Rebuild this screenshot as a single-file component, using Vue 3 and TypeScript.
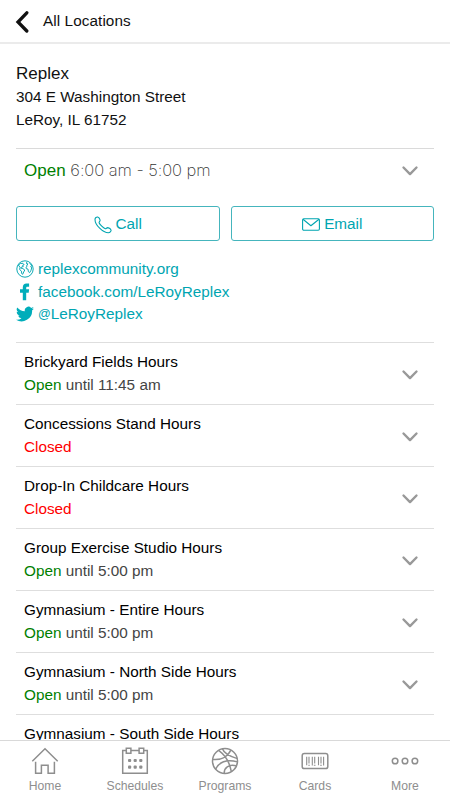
<script setup lang="ts">
interface Facility {
  name: string
  until?: string
}

const facilities: Facility[] = [
  { name: 'Brickyard Fields Hours', until: '11:45 am' },
  { name: 'Concessions Stand Hours' },
  { name: 'Drop-In Childcare Hours' },
  { name: 'Group Exercise Studio Hours', until: '5:00 pm' },
  { name: 'Gymnasium - Entire Hours', until: '5:00 pm' },
  { name: 'Gymnasium - North Side Hours', until: '5:00 pm' },
  { name: 'Gymnasium - South Side Hours', until: '5:00 pm' },
]

const tabs: string[] = ['Home', 'Schedules', 'Programs', 'Cards', 'More']
</script>

<template>
  <div class="screen">
    <header class="header">
      <svg class="back" viewBox="0 0 14 24"><path d="M11.8 2.8 3 12l8.8 9" /></svg>
      <span>All Locations</span>
    </header>

    <main class="content">
      <section class="address">
        <h1>Replex</h1>
        <p>304 E Washington Street</p>
        <p>LeRoy, IL 61752</p>
      </section>

      <section class="today">
        <div><span class="open">Open</span> <span class="time">6:00 am - 5:00 pm</span></div>
        <svg class="chevron" viewBox="0 0 18 12"><path d="m2.5 2.5 6.5 6.6 6.5-6.6" /></svg>
      </section>

      <div class="actions">
        <button>
          <svg width="18" height="18" viewBox="0 0 18 18" class="line">
            <path d="M1 3.4C1 1.9 2.6.7 3.7 1c1 .4 2.2 2.1 2.4 3.1.2 1.2-1.3 1.8-1 2.6.8 2 4.2 5.2 6.2 6 .8.3 1.4-1.2 2.5-1.1 1.1.2 3 1.6 3.3 2.5.2 1-1.3 2.6-2.7 2.7C8.9 16.8 1 9 1 3.4Z" />
          </svg>
          <span>Call</span>
        </button>
        <button>
          <svg width="18" height="13" viewBox="0 0 18 13" class="line">
            <rect x=".6" y=".8" width="16.8" height="11.4" rx="1.2" /><path d="m1 1.3 7.9 6.4L17 1.3" />
          </svg>
          <span>Email</span>
        </button>
      </div>

      <nav class="links">
        <a>
          <svg viewBox="0 0 18 18">
            <circle cx="9" cy="9" r="8.2" class="stroke" />
            <path class="stroke" d="m2.4 5 2.1-1.5 2.4-.2 1.2 1.4-1.4.5.5 1.5-1.5.2-.9 1.2 2 .5 2 1.4-1.1 2-1 2.3-1-.7-.2-2.4-1.8-1.6.3-2.2L2.4 5Zm8.3-2.9-.2 1.6 1.5.2-1.3 1.5.7.7-1.4 1.1.3 1.5 1.7.4.4 2.6 1.2 1 1.4-2.4.7-2.3-1-1.7 1.3-.6-2.6-2.6" />
          </svg>
          <span>replexcommunity.org</span>
        </a>
        <a>
          <svg viewBox="0 0 18 18"><path d="M6.8 17.3V9.7H4V6.3h2.8V4.4C6.8 1.9 8.2.6 10.4.6h2.7v3.2H11.4c-.9 0-1.2.4-1.2 1.2v1.3h2.9l-.4 3.4h-2.5v7.6Z" /></svg>
          <span>facebook.com/LeRoyReplex</span>
        </a>
        <a>
          <svg viewBox="0 0 24 24"><path d="M24 4.6a10 10 0 0 1-2.8.8 5 5 0 0 0 2.1-2.7 10 10 0 0 1-3.1 1.2 4.9 4.9 0 0 0-8.4 4.5A14 14 0 0 1 1.7 3.2a4.9 4.9 0 0 0 1.5 6.5A5 5 0 0 1 1 9.1a4.9 4.9 0 0 0 3.9 4.9 5 5 0 0 1-2.2.1 4.9 4.9 0 0 0 4.6 3.4A9.9 9.9 0 0 1 0 19.5 14 14 0 0 0 21.5 7 10 10 0 0 0 24 4.6Z" /></svg>
          <span><span class="at">@</span>LeRoyReplex</span>
        </a>
      </nav>

      <ul class="facilities">
        <li v-for="f in facilities" :key="f.name">
          <div>
            <p class="name">{{ f.name }}</p>
            <p v-if="f.until" class="until"><span class="open">Open</span> until {{ f.until }}</p>
            <p v-else class="closed">Closed</p>
          </div>
          <svg class="chevron" viewBox="0 0 18 12"><path d="m2.5 2.5 6.5 6.6 6.5-6.6" /></svg>
        </li>
      </ul>
    </main>

    <footer class="tabs">
      <div v-for="tab in tabs" :key="tab" class="tab">
        <svg viewBox="0 0 28 28">
          <g v-if="tab === 'Home'"><path d="M1.3 14.3 14 1.7l12.7 12.6M4.6 14.8v11.5h5.8v-8h6.7v8h6.3V14.8" /></g>
          <g v-else-if="tab === 'Schedules'">
            <path d="M5 3.4H1.7v22.9h24.6V3.4H23M10 3.4h8" />
            <path d="M5.3 1.3h4.6v5H5.3zM18.1 1.3h4.6v5h-4.6z" />
            <g class="dots">
              <rect v-for="n in 6" :key="n" :x="7 + ((n - 1) % 3) * 5.6" :y="n < 4 ? 11.9 : 18.5" width="3.2" height="3.2" rx="1" />
            </g>
          </g>
          <g v-else-if="tab === 'Programs'">
            <circle cx="14" cy="14" r="12.5" />
            <path d="M7.6 3.4c6.3 4.6 11 11.6 12.7 20.9M1.6 12.4c7.6.9 14.8-2.2 18.2-9.3M11.4 1.8c1.3 3.6 5.3 7 15 9.8M4.6 22.2C7.6 15.4 15.6 11.6 26.4 14.9M13.2 26.3c-.2-5.5 4.4-9.3 11.9-7.5" />
          </g>
          <g v-else-if="tab === 'Cards'">
            <rect x="1.2" y="6.6" width="25.6" height="15" rx="2.2" />
            <path class="bars" d="M5.7 9.8v8.5M8 9.8v6.7M11.3 9.8v8.7M13.7 9.8v6.7M17.5 9.8v8.5M20 9.8v6.7M22.6 9.8v8.7M7.3 18.2h1.5M12.8 18.2h1.7M19.2 18.2h1.6" />
          </g>
          <g v-else><circle cx="4.1" cy="14" r="2.8" /><circle cx="14" cy="14" r="2.8" /><circle cx="23.9" cy="14" r="2.8" /></g>
        </svg>
        <span>{{ tab }}</span>
      </div>
    </footer>
  </div>
</template>

<style>
body {
  margin: 0;
  background: #fff;
}
</style>

<style scoped>
.screen {
  display: flex;
  flex-direction: column;
  box-sizing: border-box;
  width: 450px;
  height: 800px;
  overflow: hidden;
  color: #111;
  font: 15.3px/22.5px "Liberation Sans", Arial, sans-serif;
}
.header {
  display: flex;
  align-items: center;
  flex: none;
  gap: 14px;
  box-sizing: border-box;
  height: 44px;
  padding: 1px 15px 0;
  border-bottom: 2px solid #ebebeb;
  letter-spacing: .08px;
}
.back {
  width: 14px;
  height: 24px;
}
svg {
  flex: none;
  fill: none;
}
.back path {
  stroke: #111;
  stroke-width: 3.3;
  stroke-linecap: round;
}
.content {
  flex: 1;
  min-height: 0;
  padding: 0 16px;
  overflow: hidden;
}
.address {
  padding-top: 18px;
  height: 86px;
}
h1, p {
  margin: 0;
}
h1 {
  font-size: 17px;
  line-height: 24px;
  font-weight: 400;
}
.today {
  display: flex;
  align-items: center;
  justify-content: space-between;
  box-sizing: border-box;
  height: 45px;
  padding: 0 15px 0 8px;
  border-top: 1px solid #dadada;
  font-size: 17px;
}
.open {
  color: #008000;
}
.time {
  font-family: Inter, "Liberation Sans", sans-serif;
  font-size: 16.5px;
  font-weight: 200;
  letter-spacing: -.07px;
  color: #333;
}
.chevron {
  width: 18px;
  height: 12px;
}
.chevron path {
  stroke: #999;
  stroke-width: 2.4;
  stroke-linecap: round;
  stroke-linejoin: round;
}
.actions {
  display: grid;
  grid-template-columns: 1fr 1fr;
  gap: 11px;
  padding-top: 13px;
}
button {
  display: flex;
  align-items: center;
  justify-content: center;
  gap: 4px;
  height: 35px;
  padding: 2px 0 0;
  border: 1px solid #45b5bd;
  border-radius: 3px;
  background: #fff;
  color: #00a5b1;
  font: inherit;
}
.line {
  stroke: #00a5b1;
  stroke-width: 1.1;
  stroke-linejoin: round;
}
.links {
  padding-top: 17px;
  height: 84px;
  color: #00a5b1;
}
.links a {
  display: flex;
  align-items: center;
  gap: 4px;
  height: 22.5px;
}
.links svg {
  width: 18px;
  height: 18px;
  fill: #00adba;
}
.links .stroke {
  fill: none;
  stroke: #00a5b1;
  stroke-width: .95;
}
.at {
  font-size: 12.6px;
  vertical-align: 1px;
  line-height: 1;
}
.facilities {
  margin: 0;
  padding: 0;
  list-style: none;
}
.facilities li {
  display: flex;
  align-items: center;
  justify-content: space-between;
  box-sizing: border-box;
  height: 62px;
  padding: 0 15px 0 8px;
  border-top: 1px solid #dedede;
}
.facilities .chevron {
  margin-top: 2px;
}
.name {
  color: #000;
}
.until {
  color: #444;
}
.closed {
  color: #f00;
}
.tabs {
  display: grid;
  grid-template-columns: repeat(5, 90px);
  flex: none;
  box-sizing: border-box;
  height: 60px;
  padding-top: 6px;
  border-top: 1px solid #d9d9d9;
  background: #fff;
}
.tab {
  display: flex;
  flex-direction: column;
  align-items: center;
  color: #8e8e8e;
  font-size: 12.2px;
  line-height: 23px;
}
.tab svg {
  width: 28px;
  height: 28px;
  stroke: #8e8e8e;
  stroke-width: 1.5;
}
.tab .dots {
  fill: #8e8e8e;
  stroke: none;
}
.tab .bars {
  stroke-width: 1.1;
}
</style>
